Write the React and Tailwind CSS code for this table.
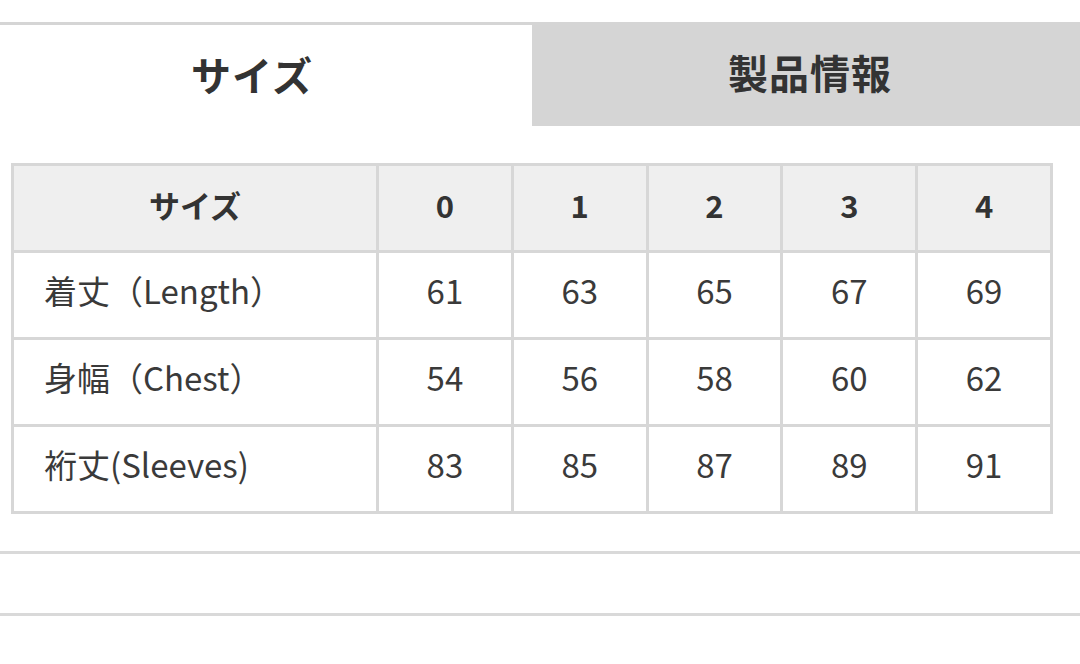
const heads = ["0", "1", "2", "3", "4"];

const rows = [
  { label: "着丈（Length）", values: [61, 63, 65, 67, 69] },
  { label: "身幅（Chest）", values: [54, 56, 58, 60, 62] },
  { label: "裄丈(Sleeves)", values: [83, 85, 87, 89, 91] },
];

export default function App() {
  return (
    <div
      className="w-[1080px] h-[664px] bg-white text-[#333] overflow-hidden"
      style={{ fontFamily: '"Noto Sans CJK JP", "Noto Sans", sans-serif' }}
    >
      {/* Tabs */}
      <div className="flex mt-[22px] h-[104px]">
        <div className="w-[532px] border-t-[3px] border-[#d5d5d5] flex items-center justify-center pr-[28px] pb-[4px]">
          <span className="text-[40px] font-bold tracking-[1px]">サイズ</span>
        </div>
        <div className="flex-1 bg-[#d5d5d5] flex items-center justify-center pl-[8px] pb-[4px]">
          <span className="text-[40px] font-bold tracking-[1px]">製品情報</span>
        </div>
      </div>

      {/* Size table */}
      <div className="mx-[11px] mt-[37px]">
        <table className="w-[1042px] border-collapse table-fixed">
          <colgroup>
            <col className="w-[365px]" />
            {heads.map((h) => (
              <col key={h} />
            ))}
          </colgroup>
          <thead>
            <tr className="h-[87px] bg-[#efefef]">
              <th className="border-[3px] border-[#d7d7d7] text-[31px] font-bold pb-[6px]">サイズ</th>
              {heads.map((h) => (
                <th key={h} className="border-[3px] border-[#d7d7d7] text-[31px] font-bold pb-[6px]">
                  {h}
                </th>
              ))}
            </tr>
          </thead>
          <tbody>
            {rows.map((r) => (
              <tr key={r.label} className="h-[87px]">
                <td className="border-[3px] border-[#d7d7d7] pl-[30px] pb-[8px] text-[33px] text-left text-[#3a3a3a]">
                  {r.label}
                </td>
                {r.values.map((v) => (
                  <td key={v} className="border-[3px] border-[#d7d7d7] pb-[8px] text-[33px] text-center text-[#3a3a3a]">
                    {v}
                  </td>
                ))}
              </tr>
            ))}
          </tbody>
        </table>
      </div>

      {/* Empty accordion rows */}
      <div className="mt-[37px] border-t-[3px] border-[#d9d9d9] h-[62px]" />
      <div className="border-t-[3px] border-[#d9d9d9]" />
    </div>
  );
}
